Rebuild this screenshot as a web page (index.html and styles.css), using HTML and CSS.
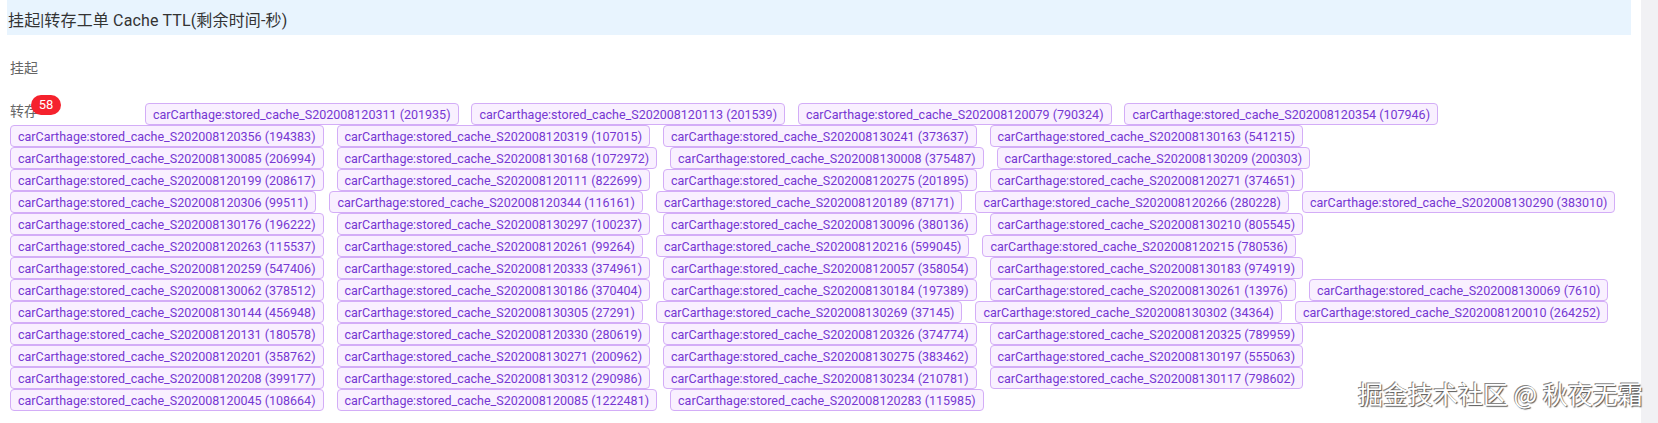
FILE: index.html
```html
<!DOCTYPE html>
<html lang="zh">
<head>
<meta charset="utf-8">
<title>Cache TTL</title>
<link rel="stylesheet" href="styles.css">
</head>
<body>
<div class="page">
<main class="main">
<h1 class="title">挂起|转存工单 Cache TTL(剩余时间-秒)</h1>
<section class="group group-first"><span class="label">挂起</span></section>
<section class="group group-tags">
<span class="label-wrap"><span class="label">转存</span><span class="badge">58</span></span>
<span class="tag">carCarthage:stored_cache_S202008120311 (201935)</span>
<span class="tag">carCarthage:stored_cache_S202008120113 (201539)</span>
<span class="tag">carCarthage:stored_cache_S202008120079 (790324)</span>
<span class="tag">carCarthage:stored_cache_S202008120354 (107946)</span>
<span class="tag">carCarthage:stored_cache_S202008120356 (194383)</span>
<span class="tag">carCarthage:stored_cache_S202008120319 (107015)</span>
<span class="tag">carCarthage:stored_cache_S202008130241 (373637)</span>
<span class="tag">carCarthage:stored_cache_S202008130163 (541215)</span>
<span class="tag">carCarthage:stored_cache_S202008130085 (206994)</span>
<span class="tag">carCarthage:stored_cache_S202008130168 (1072972)</span>
<span class="tag">carCarthage:stored_cache_S202008130008 (375487)</span>
<span class="tag">carCarthage:stored_cache_S202008130209 (200303)</span>
<span class="tag">carCarthage:stored_cache_S202008120199 (208617)</span>
<span class="tag">carCarthage:stored_cache_S202008120111 (822699)</span>
<span class="tag">carCarthage:stored_cache_S202008120275 (201895)</span>
<span class="tag">carCarthage:stored_cache_S202008120271 (374651)</span>
<span class="tag">carCarthage:stored_cache_S202008120306 (99511)</span>
<span class="tag">carCarthage:stored_cache_S202008120344 (116161)</span>
<span class="tag">carCarthage:stored_cache_S202008120189 (87171)</span>
<span class="tag">carCarthage:stored_cache_S202008120266 (280228)</span>
<span class="tag">carCarthage:stored_cache_S202008130290 (383010)</span>
<span class="tag">carCarthage:stored_cache_S202008130176 (196222)</span>
<span class="tag">carCarthage:stored_cache_S202008130297 (100237)</span>
<span class="tag">carCarthage:stored_cache_S202008130096 (380136)</span>
<span class="tag">carCarthage:stored_cache_S202008130210 (805545)</span>
<span class="tag">carCarthage:stored_cache_S202008120263 (115537)</span>
<span class="tag">carCarthage:stored_cache_S202008120261 (99264)</span>
<span class="tag">carCarthage:stored_cache_S202008120216 (599045)</span>
<span class="tag">carCarthage:stored_cache_S202008120215 (780536)</span>
<span class="tag">carCarthage:stored_cache_S202008120259 (547406)</span>
<span class="tag">carCarthage:stored_cache_S202008120333 (374961)</span>
<span class="tag">carCarthage:stored_cache_S202008120057 (358054)</span>
<span class="tag">carCarthage:stored_cache_S202008130183 (974919)</span>
<span class="tag">carCarthage:stored_cache_S202008130062 (378512)</span>
<span class="tag">carCarthage:stored_cache_S202008130186 (370404)</span>
<span class="tag">carCarthage:stored_cache_S202008130184 (197389)</span>
<span class="tag">carCarthage:stored_cache_S202008130261 (13976)</span>
<span class="tag">carCarthage:stored_cache_S202008130069 (7610)</span>
<span class="tag">carCarthage:stored_cache_S202008130144 (456948)</span>
<span class="tag">carCarthage:stored_cache_S202008130305 (27291)</span>
<span class="tag">carCarthage:stored_cache_S202008130269 (37145)</span>
<span class="tag">carCarthage:stored_cache_S202008130302 (34364)</span>
<span class="tag">carCarthage:stored_cache_S202008120010 (264252)</span>
<span class="tag">carCarthage:stored_cache_S202008120131 (180578)</span>
<span class="tag">carCarthage:stored_cache_S202008120330 (280619)</span>
<span class="tag">carCarthage:stored_cache_S202008120326 (374774)</span>
<span class="tag">carCarthage:stored_cache_S202008120325 (789959)</span>
<span class="tag">carCarthage:stored_cache_S202008120201 (358762)</span>
<span class="tag">carCarthage:stored_cache_S202008130271 (200962)</span>
<span class="tag">carCarthage:stored_cache_S202008130275 (383462)</span>
<span class="tag">carCarthage:stored_cache_S202008130197 (555063)</span>
<span class="tag">carCarthage:stored_cache_S202008120208 (399177)</span>
<span class="tag">carCarthage:stored_cache_S202008130312 (290986)</span>
<span class="tag">carCarthage:stored_cache_S202008130234 (210781)</span>
<span class="tag">carCarthage:stored_cache_S202008130117 (798602)</span>
<span class="tag">carCarthage:stored_cache_S202008120045 (108664)</span>
<span class="tag">carCarthage:stored_cache_S202008120085 (1222481)</span>
<span class="tag">carCarthage:stored_cache_S202008120283 (115985)</span>
</section>
</main>
<div class="scrollbar"></div>
</div>
<div class="watermark">掘金技术社区 @ 秋夜无霜</div>
</body>
</html>
```
FILE: styles.css
```css
* { box-sizing: border-box; }
html, body { margin: 0; padding: 0; background: #fff; overflow: hidden; }
body { font-family: Roboto, "Noto Sans CJK SC", sans-serif; }
.page { display: flex; width: 1658px; height: 423px; }
.main { width: 1641px; padding: 0 10px 0 7px; }
.title { margin: 0; height: 35px; padding-left: 1px; background: #e8f4fe; font-size: 16px; font-weight: 400; line-height: 41px; color: #333; letter-spacing: 0.15px; }
.group { padding-left: 3px; padding-right: 3px; }
.group-first { margin-top: 22px; height: 21px; }
.group-tags { margin-top: 25px; font-size: 12px; line-height: 22px; }
.label { font-size: 14px; color: #666; }
.label-wrap { display: inline-block; position: relative; width: 132px; height: 22px; vertical-align: bottom; line-height: 17px; }
.badge { position: absolute; left: 21px; top: -8px; height: 20px; min-width: 30px; border-radius: 10px; background: #f5222d; color: #fff; font-size: 13px; line-height: 20px; text-align: center; }
.tag { display: inline-block; height: 22px; line-height: 21px; margin-right: 10px; padding: 0 7px; border: 1px solid #d3adf7; border-radius: 4px; background: #f9f0ff; color: #7637d2; font-size: 12.52px; white-space: nowrap; vertical-align: bottom; }
.scrollbar { width: 17px; background: #f1f1f4; }
.watermark { position: absolute; left: 1358px; top: 377px; font-size: 25px; line-height: 32px; color: #fff; white-space: nowrap; font-family: "Noto Sans CJK SC", sans-serif; text-shadow: 1px 1px 1px #555, -1px -1px 0 #888; }
```
